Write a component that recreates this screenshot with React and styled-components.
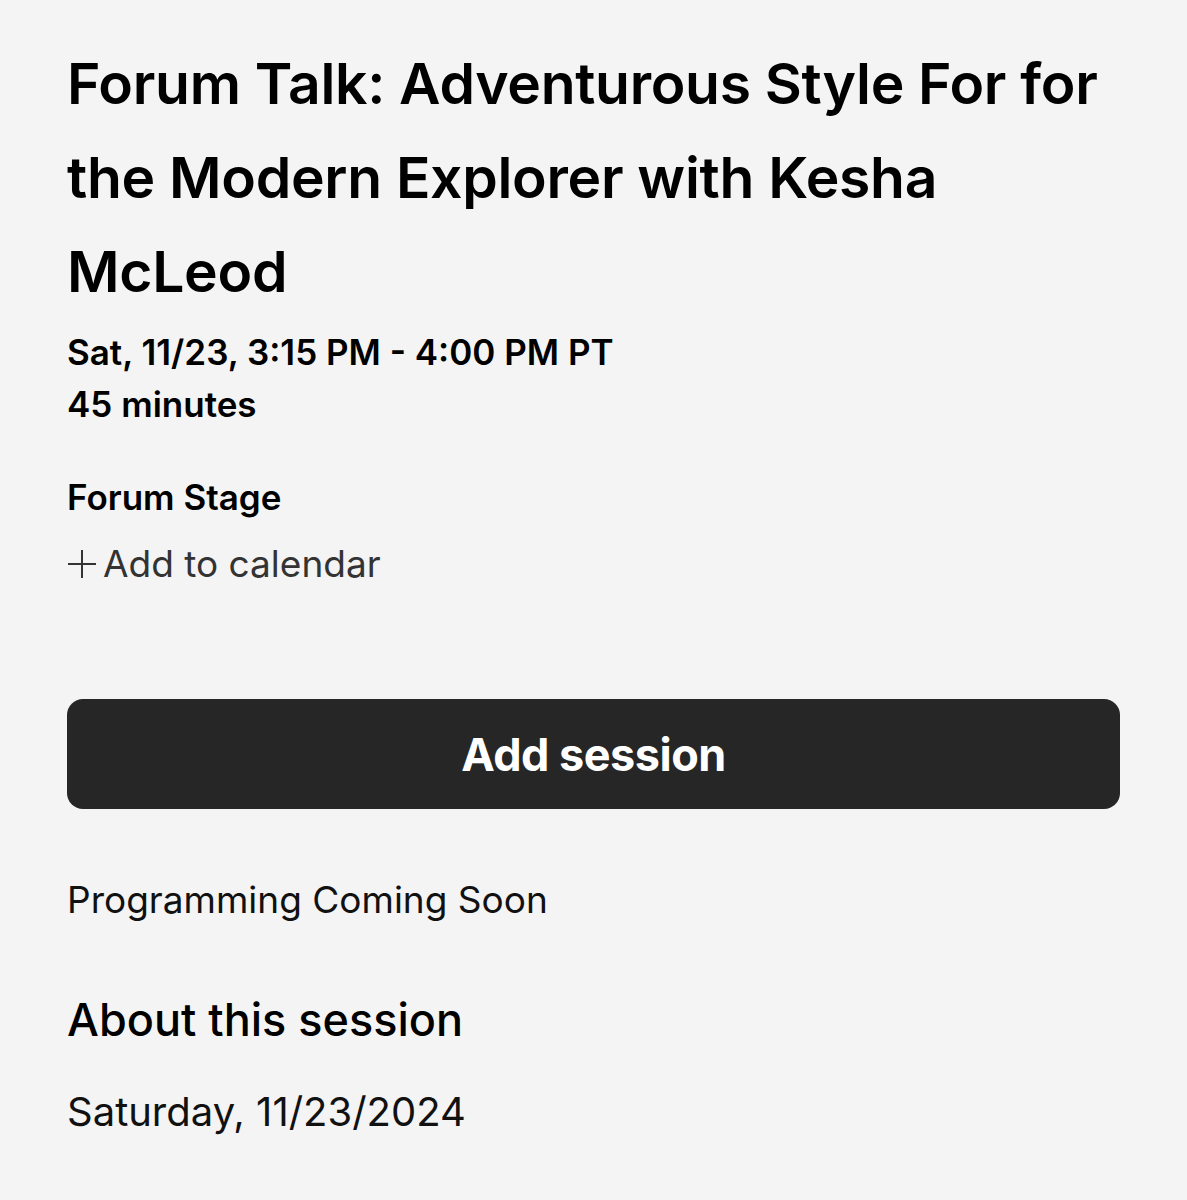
import React from 'react';
import styled, { createGlobalStyle } from 'styled-components';

const GlobalStyle = createGlobalStyle`
  html, body {
    margin: 0;
    padding: 0;
    background: #f4f4f4;
  }
  body {
    font-family: Inter, "Noto Sans", "Liberation Sans", sans-serif;
    color: #000;
  }
`;

const Page = styled.div`
  padding: 37px 67px 60px 67px;
  display: flex;
  flex-direction: column;
  min-height: 1200px;
  box-sizing: border-box;
`;

const Title = styled.h1`
  margin: 0;
  font-size: 57px;
  font-weight: 600;
  line-height: 94px;
  letter-spacing: -0.3px;
  max-width: 1060px;
`;

const Meta = styled.div`
  margin-top: 7px;
  display: flex;
  flex-direction: column;
`;

const MetaLine = styled.div`
  font-size: 35px;
  font-weight: 600;
  line-height: 52px;
`;

const Venue = styled.div`
  margin-top: 43px;
  font-size: 35px;
  font-weight: 600;
  line-height: 48px;
`;

const CalendarLink = styled.a`
  margin-top: 19px;
  display: flex;
  align-items: center;
  font-size: 37px;
  line-height: 48px;
  color: #333;
  text-decoration: none;
  cursor: pointer;
`;

const PlusIcon = styled.svg`
  width: 30px;
  height: 30px;
  margin-right: 6px;
  flex: none;
`;

const AddButton = styled.button`
  margin-top: 111px;
  width: 1053px;
  height: 110px;
  border: none;
  border-radius: 16px;
  background: #262626;
  color: #fff;
  font-family: inherit;
  font-size: 45px;
  font-weight: 700;
  letter-spacing: -0.5px;
  cursor: pointer;
`;

const Notice = styled.div`
  margin-top: 67px;
  font-size: 37px;
  line-height: 48px;
  color: #111;
`;

const SectionTitle = styled.h2`
  margin: 66px 0 0 0;
  font-size: 45px;
  font-weight: 500;
  line-height: 60px;
`;

const DateText = styled.div`
  margin-top: 37px;
  font-size: 40px;
  line-height: 50px;
  color: #111;
`;

export default function App() {
  return (
    <>
      <GlobalStyle />
      <Page>
        <Title>
          Forum Talk: Adventurous Style For for the Modern Explorer with Kesha
          McLeod
        </Title>
        <Meta>
          <MetaLine>Sat, 11/23, 3:15 PM - 4:00 PM PT</MetaLine>
          <MetaLine>45 minutes</MetaLine>
        </Meta>
        <Venue>Forum Stage</Venue>
        <CalendarLink>
          <PlusIcon viewBox="0 0 30 30">
            <path d="M15 1 V29 M1 15 H29" stroke="#333" strokeWidth="2" fill="none" />
          </PlusIcon>
          Add to calendar
        </CalendarLink>
        <AddButton>Add session</AddButton>
        <Notice>Programming Coming Soon</Notice>
        <SectionTitle>About this session</SectionTitle>
        <DateText>Saturday, 11/23/2024</DateText>
      </Page>
    </>
  );
}
